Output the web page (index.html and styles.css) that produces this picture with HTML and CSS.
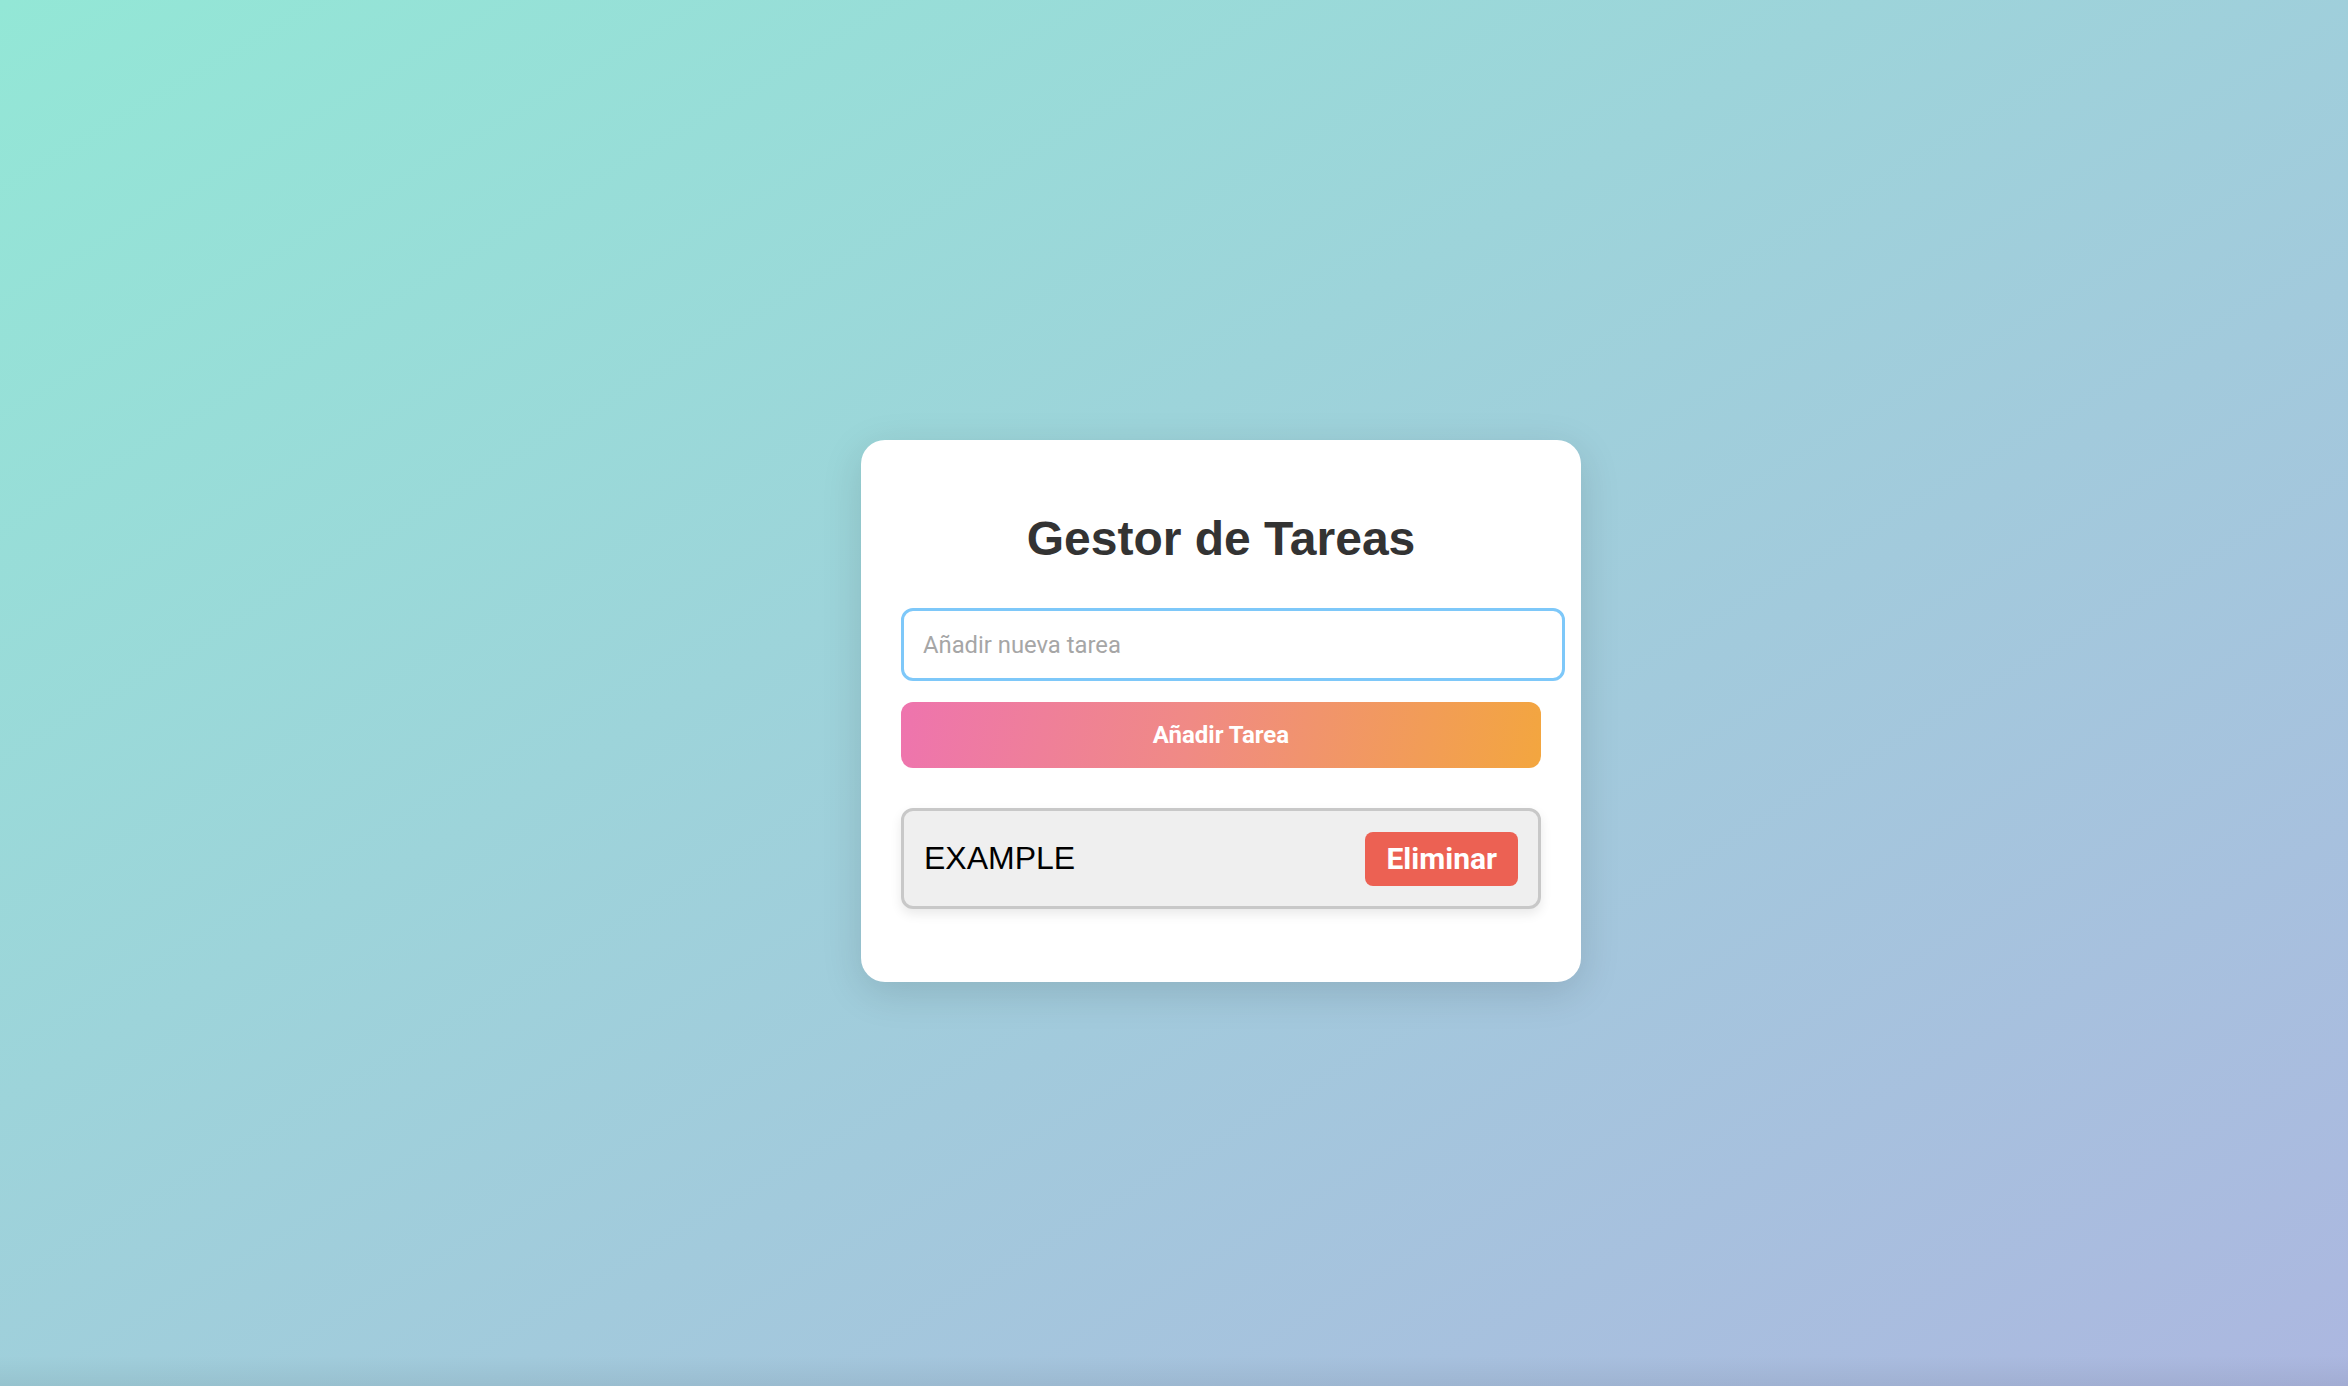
FILE: index.html
```html
<!DOCTYPE html>
<html lang="es">
<head>
<meta charset="utf-8">
<title>Gestor de Tareas</title>
<link rel="stylesheet" href="styles.css">
</head>
<body>
  <main class="card">
    <h1 class="title">Gestor de Tareas</h1>
    <input class="task-input" type="text" placeholder="Añadir nueva tarea" autofocus>
    <button class="add-btn" type="button">Añadir Tarea</button>
    <ul class="task-list">
      <li class="task-item">
        <span class="task-text">EXAMPLE</span>
        <button class="delete-btn" type="button">Eliminar</button>
      </li>
    </ul>
  </main>
</body>
</html>
```
FILE: styles.css
```css
html, body {
  margin: 0;
  height: 100%;
}

body {
  min-height: 100vh;
  box-sizing: border-box;
  padding: 36px 0 0 94px;
  display: flex;
  align-items: center;
  justify-content: center;
  background:
    linear-gradient(to top, rgba(0, 0, 0, 0.06), rgba(0, 0, 0, 0) 30px),
    linear-gradient(to bottom right, #93e7d6, #acb7e0);
  font-family: "Liberation Sans", Arial, sans-serif;
}

.card {
  width: 720px;
  box-sizing: border-box;
  padding: 40px;
  background: #ffffff;
  border-radius: 24px;
  box-shadow: 0 10px 40px rgba(0, 0, 0, 0.13);
}

.title {
  margin: 31px 0 42px;
  font-family: "Liberation Sans", Arial, sans-serif;
  font-size: 48px;
  line-height: 55px;
  font-weight: 700;
  color: #333333;
  text-align: center;
}

.task-input {
  display: block;
  width: 664px;
  height: 73px;
  box-sizing: border-box;
  margin: 0;
  padding: 0 19px;
  border: 3px solid #7ec8f9;
  border-radius: 12px;
  outline: none;
  background: #ffffff;
  font-family: Roboto, "Open Sans", sans-serif;
  font-size: 23.8px;
  color: #222222;
  caret-color: #000000;
}

.task-input::placeholder {
  color: #a6a6a6;
}

.add-btn {
  display: block;
  width: 640px;
  height: 66px;
  margin: 21px 0 0;
  padding: 0;
  border: none;
  border-radius: 12px;
  background: linear-gradient(100deg, #ee74ae 0%, #f08a85 45%, #f3a63f 100%);
  color: #ffffff;
  font-family: Roboto, "Open Sans", sans-serif;
  font-size: 24px;
  font-weight: 700;
  cursor: pointer;
}

.task-list {
  list-style: none;
  margin: 40px 0 33px;
  padding: 0;
}

.task-item {
  display: flex;
  align-items: center;
  justify-content: space-between;
  height: 101px;
  box-sizing: border-box;
  padding: 0 20px;
  background: #efefef;
  border: 3px solid #c8c8c8;
  border-radius: 12px;
  box-shadow: 0 5px 12px rgba(0, 0, 0, 0.09);
}

.task-text {
  font-family: "Liberation Sans", Arial, sans-serif;
  font-size: 32px;
  color: #000000;
}

.delete-btn {
  height: 54px;
  padding: 0 21px;
  border: none;
  border-radius: 8px;
  background: #ec6153;
  color: #ffffff;
  font-family: Roboto, "Open Sans", sans-serif;
  font-size: 30px;
  font-weight: 700;
  cursor: pointer;
}
```
